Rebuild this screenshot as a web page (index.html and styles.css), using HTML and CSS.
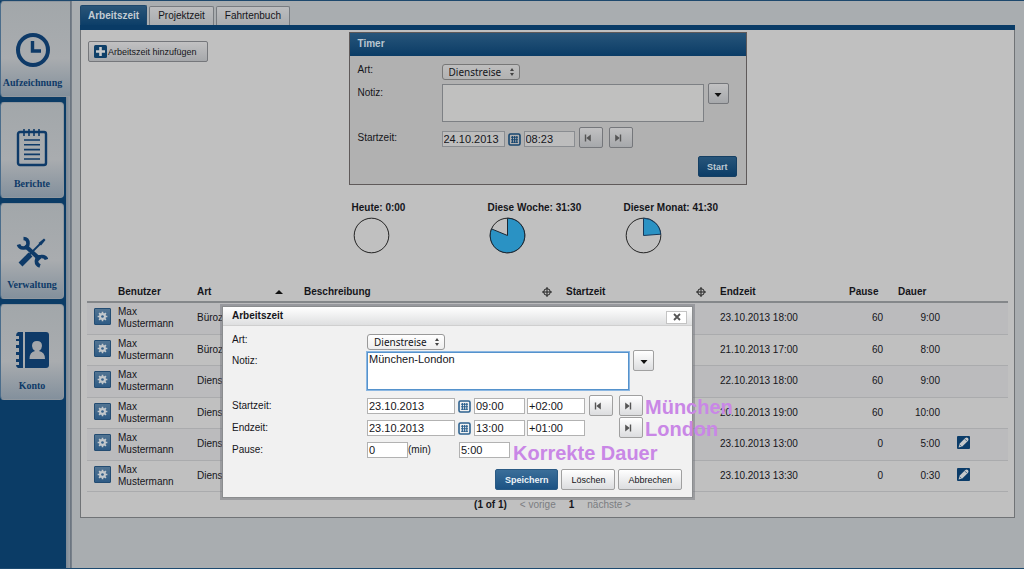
FILE: index.html
```html
<!DOCTYPE html>
<html lang="de">
<head>
<meta charset="utf-8">
<title>Arbeitszeit</title>
<meta name="viewport" content="width=device-width, initial-scale=1">
<link rel="stylesheet" href="styles.css">
</head>
<body>
<svg class="sprite" aria-hidden="true">
  <symbol id="gear" viewBox="0 0 17 17">
    <g fill="#c3c8cc"><circle cx="8.5" cy="8.5" r="3.9"/><path d="M7.6 3h1.8v11H7.6zM3 7.6h11v1.8H3z"/><path d="M7.6 3h1.8v11H7.6zM3 7.6h11v1.8H3z" transform="rotate(45 8.5 8.5)"/></g>
    <circle cx="8.5" cy="8.5" r="1.5" fill="#35618b"/>
  </symbol>
  <symbol id="calendar" viewBox="0 0 13 13">
    <rect x="1" y="1" width="11" height="11" rx="1.5" fill="none" stroke="currentColor" stroke-width="1.6"/>
    <path d="M3 4.2h7M3 6.7h7M3 9.2h7M4.4 3v7M6.6 3v7M8.8 3v7" stroke="currentColor" stroke-width="1.1"/>
  </symbol>
  <symbol id="first" viewBox="0 0 10 10"><path d="M2.5 1.5v7" stroke="currentColor" stroke-width="1.4"/><path d="M7.8 1.5v7L3.3 5z" fill="currentColor"/></symbol>
  <symbol id="last" viewBox="0 0 10 10"><path d="M7.5 1.5v7" stroke="currentColor" stroke-width="1.4"/><path d="M2.2 1.5v7L6.7 5z" fill="currentColor"/></symbol>
  <symbol id="down" viewBox="0 0 10 10"><path d="M1.5 4h7L5 8z" fill="#111"/></symbol>
  <symbol id="updown" viewBox="0 0 6 10"><path d="M1 4l2-3 2 3zM1 6l2 3 2-3z" fill="#444"/></symbol>
  <symbol id="sort" viewBox="0 0 10 10"><path d="M5 0v10M0 5h10" stroke="#222" stroke-width="1"/><circle cx="5" cy="5" r="3.3" fill="none" stroke="#222"/></symbol>
  <symbol id="edit" viewBox="0 0 13 13">
    <rect width="13" height="13" rx="1" fill="#0b3c69"/>
    <path d="M1.6 11.4l.9-3.6 5.8-5.9q1.4-1 2.6.2t.2 2.6L5.3 10.5z" fill="#c5c8ca"/><path d="M8 3.2l1.9 1.9M2.5 8.6l1.8 1.9" stroke="#0b3c69" stroke-width=".7"/>
  </symbol>
</svg>

<div class="app">
  <nav class="sidebar">
    <a class="nav active" href="#aufzeichnung">
      <svg class="nav-icon" viewBox="0 0 36 36"><circle cx="18" cy="18" r="15" fill="none" stroke="currentColor" stroke-width="4"/><path d="M17.5 9v10H26" fill="none" stroke="currentColor" stroke-width="3.4"/></svg>
      <span>Aufzeichnung</span>
    </a>
    <a class="nav" href="#berichte">
      <svg class="nav-icon tall" viewBox="0 0 32 38"><rect x="2" y="3" width="28" height="33" rx="2" fill="none" stroke="currentColor" stroke-width="2.4"/><path d="M8 0v7M13 0v7M18 0v7M23 0v7M8 11h16M8 15.800h16M8 20.600h16M8 25.400h16M8 30h16" stroke="currentColor" stroke-width="1.6"/></svg>
      <span>Berichte</span>
    </a>
    <a class="nav" href="#verwaltung">
      <svg class="nav-icon tool" viewBox="0 0 32 32"><path d="M9 9.500L24 23.500" stroke="currentColor" stroke-width="4.200"/><path d="M7.500 2.500q4.500 0 4.500 5t-5 4.500q-3.500 0-4.500-3.500M25 20.500q-4 0-4.500 4t3.500 5.500M25 20.500q4.500-.5 5.500 3" fill="none" stroke="currentColor" stroke-width="3.600"/><path d="M4.500 28.500L14.500 18.500" stroke="currentColor" stroke-width="5.500"/><path d="M13 19L25 7" stroke="currentColor" stroke-width="1.800"/><path d="M22.500 7l5.500-4.500 1.500 1.500L25 9.500z" fill="currentColor"/></svg>
      <span>Verwaltung</span>
    </a>
    <a class="nav" href="#konto">
      <svg class="nav-icon tall" viewBox="0 0 34 38"><path d="M3 1h5v36H3q-2-1-2-3h3v-3H1v-3h3v-4H1v-3h3v-4H1v-3h3v-4H1V8h3V5H1q0-3 2-4z" fill="currentColor"/><path d="M10 1h21q3 0 3 3v30q0 3-3 3H10z" fill="currentColor"/><path d="M14.500 28q0-7 5.500-8-3-2-3-5 0-5 5-5t5 5q0 3-3 5 6 1 6 8z" fill="#a4a7ab"/></svg>
      <span>Konto</span>
    </a>
  </nav>

  <main class="main">
    <div class="tabs" role="tablist">
      <button class="tab selected" role="tab" aria-selected="true">Arbeitszeit</button>
      <button class="tab" role="tab" aria-selected="false">Projektzeit</button>
      <button class="tab" role="tab" aria-selected="false">Fahrtenbuch</button>
    </div>
    <section class="panel">
      <div class="top">
        <div><button class="btn add"><svg class="plus" viewBox="0 0 13 13"><rect width="13" height="13" rx="1.500" fill="#0f4069"/><path d="M6.500 2v9M2 6.500h9" stroke="#c8cacc" stroke-width="2.600"/></svg>Arbeitszeit hinzufügen</button></div>
        <div>
          <section class="timer">
            <h2 class="timer-title">Timer</h2>
            <form class="timer-form">
              <div class="row art"><label class="label" for="t-art">Art:</label>
                <span class="select"><select id="t-art"><option>Dienstreise</option></select><svg viewBox="0 0 6 10"><use href="#updown"/></svg></span></div>
              <div class="row note"><label class="label" for="t-note">Notiz:</label>
                <textarea id="t-note" class="area"></textarea><button type="button" class="btn drop" aria-label="Notiz auswählen"><svg class="glyph"><use href="#down"/></svg></button></div>
              <div class="row time"><label class="label" for="t-date">Startzeit:</label>
                <input id="t-date" class="field date" value="24.10.2013"><button type="button" class="cal" aria-label="Kalender"><svg class="cal-icon"><use href="#calendar"/></svg></button><input class="field hour" aria-label="Uhrzeit" value="08:23"><button type="button" class="btn step" aria-label="Zurück"><svg class="glyph"><use href="#first"/></svg></button><button type="button" class="btn step next" aria-label="Vor"><svg class="glyph"><use href="#last"/></svg></button></div>
              <div class="actions"><button type="button" class="btn primary">Start</button></div>
            </form>
          </section>
          <div class="stats">
            <div class="stat">Heute: 0:00<svg class="pie" viewBox="0 0 37 37"><circle cx="18.500" cy="18.500" r="17.300" fill="none" stroke="#222"/></svg></div>
            <div class="stat">Diese Woche: 31:30<svg class="pie" viewBox="0 0 37 37"><circle cx="18.500" cy="18.500" r="17.300" fill="none" stroke="#222"/><path d="M18.500 18.500V1.200A17.300 17.300 0 1 1 2.500 11.900z" fill="#2a92c4" stroke="#1c2834"/></svg></div>
            <div class="stat">Dieser Monat: 41:30<svg class="pie" viewBox="0 0 37 37"><circle cx="18.500" cy="18.500" r="17.300" fill="none" stroke="#222"/><path d="M18.500 18.500V1.200A17.300 17.300 0 0 1 35.700 17.200z" fill="#2a92c4" stroke="#17385a"/></svg></div>
          </div>
        </div>
      </div>

      <table class="times">
        <colgroup><col class="c-gear"><col class="c-user"><col class="c-art"><col><col class="c-start"><col class="c-end"><col class="c-pause"><col class="c-dur"><col class="c-edit"></colgroup>
        <thead><tr><th></th><th>Benutzer</th>
          <th><span class="sorter">Art<svg class="asc" viewBox="0 0 8 4"><path d="M0 4l4-4 4 4z" fill="#111"/></svg></span></th>
          <th><span class="sorter">Beschreibung<svg class="sort-icon"><use href="#sort"/></svg></span></th>
          <th><span class="sorter">Startzeit<svg class="sort-icon"><use href="#sort"/></svg></span></th>
          <th>Endzeit</th><th>Pause</th><th>Dauer</th><th></th></tr></thead>
        <tbody>
          <tr><td class="tool-cell"><button class="gear" aria-label="Optionen"><svg><use href="#gear"/></svg></button></td><td>Max Mustermann</td><td>Bürozeit</td><td></td><td></td><td>23.10.2013 18:00</td><td class="num pause">60</td><td class="num">9:00</td><td></td></tr>
          <tr><td class="tool-cell"><button class="gear" aria-label="Optionen"><svg><use href="#gear"/></svg></button></td><td>Max Mustermann</td><td>Bürozeit</td><td></td><td></td><td>21.10.2013 17:00</td><td class="num pause">60</td><td class="num">8:00</td><td></td></tr>
          <tr><td class="tool-cell"><button class="gear" aria-label="Optionen"><svg><use href="#gear"/></svg></button></td><td>Max Mustermann</td><td>Dienstreise</td><td></td><td></td><td>22.10.2013 18:00</td><td class="num pause">60</td><td class="num">9:00</td><td></td></tr>
          <tr><td class="tool-cell"><button class="gear" aria-label="Optionen"><svg><use href="#gear"/></svg></button></td><td>Max Mustermann</td><td>Dienstreise</td><td></td><td></td><td>20.10.2013 19:00</td><td class="num pause">60</td><td class="num">10:00</td><td></td></tr>
          <tr><td class="tool-cell"><button class="gear" aria-label="Optionen"><svg><use href="#gear"/></svg></button></td><td>Max Mustermann</td><td>Dienstreise</td><td></td><td></td><td>23.10.2013 13:00</td><td class="num pause">0</td><td class="num">5:00</td><td class="edit-cell"><button class="edit" aria-label="Bearbeiten"><svg><use href="#edit"/></svg></button></td></tr>
          <tr><td class="tool-cell"><button class="gear" aria-label="Optionen"><svg><use href="#gear"/></svg></button></td><td>Max Mustermann</td><td>Dienstreise</td><td></td><td></td><td>23.10.2013 13:30</td><td class="num pause">0</td><td class="num">0:30</td><td class="edit-cell"><button class="edit" aria-label="Bearbeiten"><svg><use href="#edit"/></svg></button></td></tr>
        </tbody>
      </table>
      <div class="pager"><b>(1 of 1)</b><a class="off" href="#prev">&lt; vorige</a><b>1</b><a class="off" href="#next">nächste &gt;</a></div>
    </section>
  </main>
</div>

<div class="dialog" role="dialog" aria-labelledby="dlg-title">
  <header class="dialog-head"><h2 id="dlg-title">Arbeitszeit</h2><button class="close" aria-label="Schließen"><svg viewBox="0 0 8 8"><path d="M1 1l6 6M7 1L1 7" stroke="#555" stroke-width="1.800"/></svg></button></header>
  <form class="dialog-form">
    <div class="row art"><label class="label" for="d-art">Art:</label>
      <span class="select"><select id="d-art"><option>Dienstreise</option></select><svg viewBox="0 0 6 10"><use href="#updown"/></svg></span></div>
    <div class="row note"><label class="label" for="d-note">Notiz:</label>
      <textarea id="d-note" class="area focused">München-London</textarea><button type="button" class="btn drop" aria-label="Notiz auswählen"><svg class="glyph"><use href="#down"/></svg></button></div>
    <div class="row time"><label class="label" for="d-start">Startzeit:</label>
      <input id="d-start" class="field date" value="23.10.2013"><button type="button" class="cal" aria-label="Kalender"><svg class="cal-icon"><use href="#calendar"/></svg></button><input class="field hour" aria-label="Uhrzeit Start" value="09:00"><input class="field zone" aria-label="Zeitzone Start" value="+02:00"><button type="button" class="btn step" aria-label="Zurück"><svg class="glyph"><use href="#first"/></svg></button><button type="button" class="btn step next" aria-label="Vor"><svg class="glyph"><use href="#last"/></svg></button></div>
    <div class="row time"><label class="label" for="d-end">Endzeit:</label>
      <input id="d-end" class="field date" value="23.10.2013"><button type="button" class="cal" aria-label="Kalender"><svg class="cal-icon"><use href="#calendar"/></svg></button><input class="field hour" aria-label="Uhrzeit Ende" value="13:00"><input class="field zone" aria-label="Zeitzone Ende" value="+01:00"><button type="button" class="btn step lone" aria-label="Vor"><svg class="glyph"><use href="#last"/></svg></button></div>
    <div class="row time"><label class="label" for="d-pause">Pause:</label>
      <input id="d-pause" class="field pause-len" value="0"><span class="unit">(min)</span><input class="field hour" aria-label="Dauer" value="5:00"></div>
    <div class="actions"><button type="button" class="btn primary">Speichern</button><button type="button" class="btn">Löschen</button><button type="button" class="btn">Abbrechen</button></div>
  </form>
  <span class="callout start">München</span>
  <span class="callout end">London</span>
  <span class="callout duration">Korrekte Dauer</span>
</div>
</body>
</html>
```

FILE: styles.css
```css
* { box-sizing: border-box; }

body {
  margin: 0;
  background: #a9adb0;
  color: #15151a;
  font: 10px/12px "Liberation Sans", Arial, sans-serif;
}

svg { display: block; }
button, input, select, textarea { margin: 0; font: inherit; color: inherit; }
button { padding: 0; border: 0; background: none; }
h2 { margin: 0; font-size: 10px; }
a { text-decoration: none; }
.sprite { position: absolute; width: 0; height: 0; }

.app {
  display: flex;
  min-height: 100vh;
  border-top: 1px solid #1d486d;
  border-bottom: 1px solid #1d4a70;
}

/* Sidebar */
.sidebar {
  display: flex;
  flex: none;
  flex-direction: column;
  gap: 5px;
  width: 72px;
  background: linear-gradient(90deg, #0b3c66 66px, #7d8995 66px, #959da5 70px, #66707c 70px, #7d858e);
}
.nav {
  display: flex;
  flex-direction: column;
  align-items: center;
  justify-content: flex-end;
  gap: 11px;
  width: 64px;
  height: 96px;
  padding-bottom: 7px;
  border: 1px solid #8f979f;
  border-left-color: #4b6d8b;
  border-radius: 4px;
  background: linear-gradient(#a2a7aa, #a9acaf 60%, #83909c);
  color: #0e3a68;
  font: bold 10px/12px "Liberation Serif", "Times New Roman", serif;
}
.nav.active {
  width: 70px;
  padding-right: 6px;
  border-right: 0;
  border-radius: 4px 0 0 4px;
  gap: 9px;
}
.nav-icon { width: 36px; height: 36px; }
.nav-icon.tall { height: 38px; }
.nav-icon.tool { width: 32px; height: 32px; }

/* Tabs */
.main { flex: 1; min-width: 0; padding: 4px 9px 0 8px; }
.tabs {
  display: flex;
  align-items: flex-end;
  gap: 2px;
  border-bottom: 5px solid #093b66;
}
.tab {
  height: 19px;
  padding: 0 8px;
  border: 1px solid #777b80;
  border-bottom: 0;
  border-radius: 2px 2px 0 0;
  background: linear-gradient(#bcbdbf, #a9acaf);
}
.tab.selected {
  height: 20px;
  padding: 0 7px;
  background: linear-gradient(#2a5578, #0c3e68);
  border-color: #1e476b;
  color: #c3cbd2;
  font-weight: bold;
}

.panel {
  padding: 2px 6px 6px;
  border: 1px solid #707376;
  border-top: 0;
  background: #c0c0c0;
}
.top { display: grid; grid-template-columns: 1fr auto 1fr; }

/* Buttons */
.btn {
  display: flex;
  align-items: center;
  justify-content: center;
  height: 21px;
  padding: 0 8px;
  border: 1px solid #75777b;
  border-radius: 2px;
  background: linear-gradient(#c1c1c2, #a6a8ab);
  font-size: 9px;
}
.btn.primary {
  border-color: #153f63;
  background: linear-gradient(#27557a, #0c3d67);
  color: #bdc8d1;
  font-weight: bold;
}
.add { margin: 9px 0 0 1px; padding: 0 10px 0 5px; }
.plus { width: 13px; height: 13px; margin-right: 1px; }
.glyph { width: 10px; height: 10px; }
.drop { width: 21px; padding: 0; margin-left: 4px; }
.step { width: 24px; padding: 0 6px 0 0; margin-left: 4px; color: #555; }
.step.next { margin-left: 6px; }
.step.lone { margin-left: 34px; }

/* Form rows */
.row { display: flex; align-items: flex-start; }
.label { flex: none; width: 85px; }
.select { position: relative; }
.select select {
  width: 78px;
  height: 16px;
  padding: 0 6px;
  border: 1px solid #777;
  border-radius: 3px;
  appearance: none;
  background: linear-gradient(#bebebe, #b2b2b2);
  font: 10px/14px "Noto Sans", sans-serif;
}
.select svg { position: absolute; top: 3px; right: 5px; width: 6px; height: 10px; pointer-events: none; }
.area {
  width: 262px;
  height: 38px;
  padding: 0 1px;
  border: 1px solid #7d8084;
  resize: none;
  background: #c0c0bf;
  font-size: 11px;
}
.field {
  height: 16px;
  padding: 0 1px;
  border: 1px solid #8a8d91;
  background: #bdbdbd;
  font-size: 11px;
}
.hour { width: 51px; }
.cal { margin: 2px 3px 0; color: #17466f; }
.cal-icon { width: 13px; height: 13px; }
.actions { display: flex; justify-content: flex-end; gap: 3px; }

/* Timer */
.timer { width: 398px; border: 1px solid #5f5a5a; background: #b1b1b1; }
.timer-title {
  padding: 5px 8px 6px;
  background: linear-gradient(#27557a, #0b3c66);
  color: #bac6d0;
}
.timer-form { padding: 8px 9px 7px 8px; }
.timer .art { height: 19px; }
.timer .note { height: 44px; }
.timer .note .label { padding-top: 4px; }
.timer .area { margin-top: 1px; }
.timer .time { height: 29px; }
.timer .label { width: 84px; }
.timer .time .label { padding-top: 5px; }
.timer .field { margin-top: 4px; }
.timer .cal { margin-top: 6px; }
.timer .date { width: 63px; }

.stats {
  display: grid;
  grid-template-columns: 136px 136px auto;
  padding: 17px 0 29px 3px;
  font-weight: bold;
}
.pie { width: 37px; height: 37px; margin: 3px 0 0 1px; }

/* Time table */
.times { width: 100%; border-collapse: collapse; table-layout: fixed; }
.c-gear { width: 25px; }
.c-user { width: 79px; }
.c-art { width: 107px; }
.c-start { width: 154px; }
.c-end { width: 129px; }
.c-pause { width: 49px; }
.c-dur { width: 54px; }
.c-edit { width: 62px; }
.times th { height: 19px; padding: 0 6px; border-bottom: 2px solid #84878a; text-align: left; }
.times td { height: 31px; padding: 0 6px; border-bottom: 1px solid #aaabad; }
.times tbody tr:nth-child(odd) { height: 32px; background: #bbbbbd; }
.sorter { display: flex; align-items: center; justify-content: space-between; }
.asc { width: 8px; height: 4px; margin-right: 9px; }
.sort-icon { width: 10px; height: 10px; margin-right: 2px; }
.times .num { text-align: right; }
.times .pause { padding-right: 9px; }
.times .tool-cell { padding: 0 0 3px 7px; }
.gear {
  display: block;
  border: 1px solid #234c72;
  border-radius: 1px;
  background: linear-gradient(#527492, #2e5b85);
}
.gear svg { width: 15px; height: 15px; }
.times .edit-cell { padding: 0 0 3px 11px; }
.edit { display: block; }
.edit svg { width: 13px; height: 13px; }

.pager { display: flex; justify-content: center; gap: 13px; padding: 7px 0 0 10px; }
.pager .off { color: #7b7d80; }

/* Dialog */
.dialog {
  position: absolute;
  top: 306px;
  left: 222px;
  width: 471px;
  border: 1px solid #8b8d8f;
  background: #f1f1f1;
  box-shadow: 0 0 0 2px rgba(110, 114, 120, .45);
}
.dialog-head {
  display: flex;
  align-items: center;
  justify-content: space-between;
  height: 19px;
  padding: 0 5px 0 9px;
  border-bottom: 1px solid #cfcfcf;
  background: linear-gradient(#fff, #dedfe0);
}
.close {
  display: flex;
  align-items: center;
  justify-content: center;
  width: 21px;
  height: 13px;
  margin-top: 2px;
  border: 1px solid #c4c4c4;
  background: #fff;
}
.close svg { width: 8px; height: 8px; }
.dialog-form { padding: 8px 10px 7px 9px; }
.dialog .label { width: 135px; }
.dialog .art { height: 16px; }
.dialog .note { height: 45px; }
.dialog .note .label { padding-top: 5px; }
.dialog .area { margin-top: 2px; background: #fff; }
.dialog .area.focused { border-color: #5592cc; outline: 1px solid #8bb7e2; }
.dialog .select select { border-color: #999; background: linear-gradient(#fff, #eee); }
.dialog .time { height: 22px; }
.dialog .time .label { padding-top: 5px; }
.dialog .field { margin-top: 3px; border-color: #b2b2b2; background: #fff; }
.dialog .date { width: 88px; }
.dialog .cal { margin-top: 5px; color: #2e628f; }
.dialog .zone { width: 58px; margin-left: 2px; }
.dialog .pause-len { width: 41px; }
.unit { width: 51px; padding-top: 5px; }
.dialog .btn { border-color: #a0a0a0; background: linear-gradient(#fff, #dcdddf); }
.dialog .btn.primary { border-color: #2a5a84; background: linear-gradient(#3b6e99, #1c5384); color: #edf3f8; }
.dialog .actions { padding-top: 8px; }
.dialog .actions .btn { padding: 0 9px; }

/* Notes pinned beside the fields they explain */
.callout {
  position: absolute;
  color: #c987e6;
  font-size: 20px;
  font-weight: bold;
  line-height: 22px;
  white-space: nowrap;
}
.callout.start { top: 89px; left: 422px; }
.callout.end { top: 111px; left: 422px; }
.callout.duration { top: 135px; left: 290px; }
```
